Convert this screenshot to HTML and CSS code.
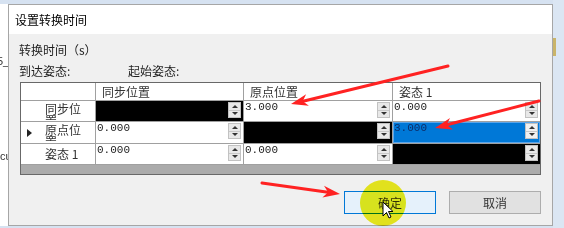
FILE: index.html
```html
<!DOCTYPE html>
<html lang="zh">
<head>
<meta charset="utf-8">
<title>设置转换时间</title>
<link rel="stylesheet" href="styles.css">
</head>
<body>
<div class="desktop">
  <div class="left-strip">
    <span class="bg-t1">5_</span>
    <span class="bg-t2">cu</span>
  </div>
  <div class="dialog">
    <div class="titlebar">设置转换时间</div>
    <div class="body">
      <div class="line1">转换时间（s）</div>
      <div class="labels"><span class="lab-a">到达姿态:</span><span>起始姿态:</span></div>
      <div class="grid">
        <div class="cell corner"></div>
        <div class="cell hdr">同步位置</div>
        <div class="cell hdr">原点位置</div>
        <div class="cell hdr last">姿态 1</div>

        <div class="cell rowhdr"><span class="ind"></span><span class="rlabel">同步位置</span></div>
        <div class="cell val black"><span class="txt"></span><span class="spin"><i class="up"></i><i class="dn"></i></span></div>
        <div class="cell val"><span class="txt">3.000</span><span class="spin"><i class="up"></i><i class="dn"></i></span></div>
        <div class="cell val last"><span class="txt">0.000</span><span class="spin"><i class="up"></i><i class="dn"></i></span></div>

        <div class="cell rowhdr"><span class="ind ind-on"></span><span class="rlabel">原点位置</span></div>
        <div class="cell val"><span class="txt">0.000</span><span class="spin"><i class="up"></i><i class="dn"></i></span></div>
        <div class="cell val black"><span class="txt"></span><span class="spin"><i class="up"></i><i class="dn"></i></span></div>
        <div class="cell val last sel"><span class="txt">3.000</span><span class="spin"><i class="up"></i><i class="dn"></i></span></div>

        <div class="cell rowhdr"><span class="ind"></span><span class="rlabel">姿态 1</span></div>
        <div class="cell val"><span class="txt">0.000</span><span class="spin"><i class="up"></i><i class="dn"></i></span></div>
        <div class="cell val"><span class="txt">0.000</span><span class="spin"><i class="up"></i><i class="dn"></i></span></div>
        <div class="cell val last black"><span class="txt"></span><span class="spin"><i class="up"></i><i class="dn"></i></span></div>

        <div class="filler"></div>
      </div>
      <div class="buttons">
        <button class="btn btn-ok">确定</button>
        <button class="btn">取消</button>
      </div>
    </div>
  </div>
  <div class="right-strip"><span class="ybar"></span></div>

  <div class="hl"></div>
  <svg class="cursor" width="12" height="18" viewBox="0 0 12 18">
    <path d="M1,1 L1,15 L4.5,11.5 L7,17 L9,16 L6.5,10.5 L11,10.5 Z" fill="#fff" stroke="#000" stroke-width="1" stroke-linejoin="round"/>
  </svg>
  <svg class="arrows" width="564" height="228" viewBox="0 0 564 228">
    <g stroke="#ff2222" stroke-width="3" stroke-linecap="round">
      <line x1="448" y1="66" x2="302" y2="101.5"/>
      <line x1="539" y1="101" x2="446" y2="125"/>
      <line x1="262" y1="183" x2="328" y2="192.3"/>
    </g>
    <g fill="#ff2222">
      <polygon points="291,104 308.9,105.8 302.7,101.2 306.1,94.2"/>
      <polygon points="435,128 453,129.5 446.6,125 450,117.9"/>
      <polygon points="340,194 322.4,197.5 328.1,192.3 324,185.7"/>
    </g>
  </svg>
</div>
</body>
</html>
```
FILE: styles.css
```css
* { box-sizing: border-box; }
html, body { margin: 0; padding: 0; }
body {
  width: 564px;
  height: 228px;
  overflow: hidden;
  font-family: "Noto Sans CJK SC", "Noto Sans", sans-serif;
  font-size: 12px;
  color: #1e1e1e;
}
.desktop {
  position: relative;
  width: 564px;
  height: 228px;
  display: flex;
  align-items: flex-start;
  background:
    linear-gradient(#d6e2f1 0, #d6e2f1 4px, transparent 4px),
    linear-gradient(to top, #d6e2f1 0, #d6e2f1 2px, transparent 2px),
    #ffffff;
}
.left-strip {
  width: 8px;
  height: 228px;
  flex: none;
  overflow: hidden;
  display: flex;
  flex-direction: column;
  font-family: "Liberation Sans", sans-serif;
  font-size: 11px;
  color: #333;
}
.bg-t1 { margin-top: 54px; margin-left: -3px; line-height: 14px; white-space: nowrap; }
.bg-t2 { margin-top: 82px; margin-left: 0; line-height: 12px; white-space: nowrap; }

.dialog {
  width: 545px;
  height: 222px;
  flex: none;
  margin-top: 4px;
  border: 1px solid #a6a6a6;
  background: #f0f0f0;
  display: flex;
  flex-direction: column;
}
.titlebar {
  height: 29px;
  flex: none;
  background: #ffffff;
  padding-left: 6px;
  line-height: 29px;
  color: #000;
}
.body {
  flex: 1;
  padding: 0 11px 0 10px;
  display: flex;
  flex-direction: column;
}
.line1 { margin-top: 8px; line-height: 16px; }
.labels { margin-top: 5px; line-height: 16px; display: flex; }
.lab-a { width: 109px; }

.grid {
  margin-top: 3px;
  margin-left: 1px;
  border: 1px solid #686868;
  display: grid;
  grid-template-columns: 75px 148px 149px 147px;
  grid-template-rows: 18px 21px 22px 21px 9px;
  background: #ffffff;
}
.cell {
  border-right: 1px solid #a0a0a0;
  border-bottom: 1px solid #a0a0a0;
  display: flex;
  overflow: hidden;
  min-width: 0;
}
.cell.last { border-right: none; }
.filler { grid-column: 1 / -1; background: #ababab; }

.hdr { padding-left: 6px; line-height: 17px; color: #333; }

.rowhdr { align-items: center; color: #333; }
.ind {
  width: 24px;
  flex: none;
  align-self: stretch;
  display: flex;
  align-items: center;
  padding-left: 6px;
}
.ind-on::before {
  content: "";
  border-left: 5px solid #222;
  border-top: 4px solid transparent;
  border-bottom: 4px solid transparent;
}
.rlabel {
  width: 38px;
  max-height: 17px;
  line-height: 12px;
  overflow: hidden;
}

.val {
  align-items: flex-start;
  font-family: "Liberation Mono", monospace;
  font-size: 11px;
  line-height: 13px;
  padding-left: 1px;
  color: #222;
}
.val .txt { flex: 1; white-space: nowrap; }
.spin {
  flex: none;
  width: 13px;
  height: 16px;
  margin: 1px 2px 0 0;
  background: #e8e8e8;
  border: 1px solid #c2c2c2;
  display: flex;
  flex-direction: column;
}
.spin i {
  flex: 1;
  display: flex;
  align-items: center;
  justify-content: center;
}
.spin .up { border-bottom: 1px solid #c8c8c8; }
.spin .up::before {
  content: "";
  border-left: 3px solid transparent;
  border-right: 3px solid transparent;
  border-bottom: 3px solid #333;
}
.spin .dn::before {
  content: "";
  border-left: 3px solid transparent;
  border-right: 3px solid transparent;
  border-top: 3px solid #333;
}
.black { background: #000000; }
.sel {
  background: #0078d7;
  color: #0c2d69;
  box-shadow: inset 0 0 0 1px #5aa5ea;
}
.sel .spin { background: #f0f0f0; }

.buttons {
  margin-top: 16px;
  display: flex;
  justify-content: flex-end;
  gap: 13px;
}
.btn {
  width: 92px;
  height: 23px;
  padding: 0;
  border: 1px solid #adadad;
  background: #e1e1e1;
  font-family: "Noto Sans CJK SC", sans-serif;
  font-size: 12px;
  line-height: 21px;
  color: #333;
}
.btn-ok { border-color: #0078d7; background: #e5f1fb; }

.right-strip {
  flex: 1;
  height: 228px;
  background: #dbe6f3;
  display: flex;
  flex-direction: column;
}
.ybar { margin-top: 38px; width: 3px; height: 18px; background: #c9b46a; }

.hl {
  position: absolute;
  left: 360px;
  top: 180px;
  width: 46px;
  height: 46px;
  border-radius: 50%;
  background: rgb(240, 240, 30);
  mix-blend-mode: multiply;
}
.cursor { position: absolute; left: 382px; top: 201px; }
.arrows { position: absolute; left: 0; top: 0; }
```
